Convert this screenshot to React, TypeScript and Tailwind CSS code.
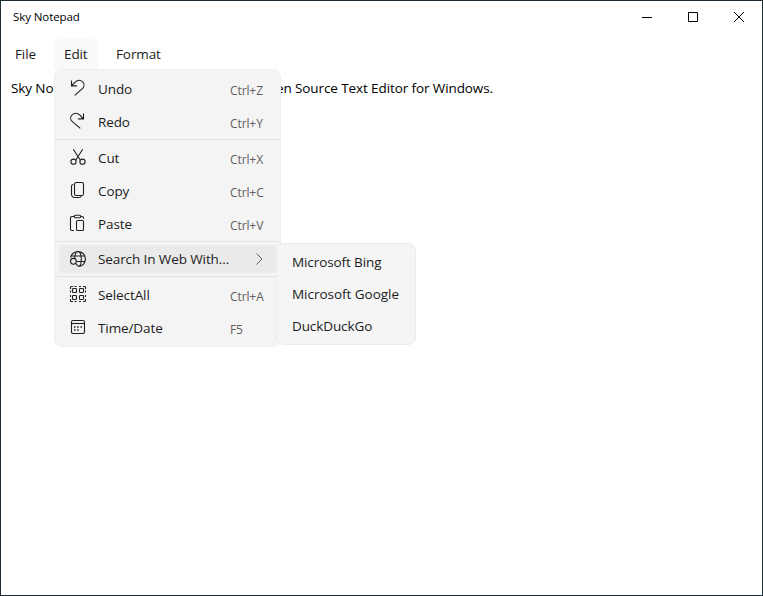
import type { ReactNode } from "react";

function Icon({ children }: { children: ReactNode }) {
  return (
    <svg className="block h-[18px] w-[18px] shrink-0" viewBox="0 0 18 18" fill="none" stroke="#202020" strokeWidth="1.1">
      {children}
    </svg>
  );
}

const undoIcon = (
  <Icon>
    <path d="M2.5 1.5v5.4h5.4M2.8 6.5 6.4 3a4.7 4.7 0 0 1 7.6.3 4.3 4.3 0 0 1-.4 6L5.8 16.4" />
  </Icon>
);
const redoIcon = (
  <Icon>
    <path d="M14.5 1.5v5.4H9.1M14.2 6.5 10.6 3a5 5 0 0 0-7.9.3 4.3 4.3 0 0 0 .4 6l8.2 7.1" />
  </Icon>
);
const cutIcon = (
  <Icon>
    <path d="M4.3 1.2 11.2 12M13.7 1.2 6.8 12" />
    <circle cx="4.5" cy="13.7" r="2.6" />
    <circle cx="13.5" cy="13.7" r="2.6" />
  </Icon>
);
const copyIcon = (
  <Icon>
    <rect x="5.5" y="1.5" width="9" height="13" rx="1.6" />
    <path d="M4.3 3.2c-1 .3-1.8 1-1.8 2v7.8c0 2.1 1.3 3.5 3.4 3.5h4.2c1 0 1.9-.6 2.2-1.6" />
  </Icon>
);
const pasteIcon = (
  <Icon>
    <path d="M5.3 2.5H2.7c-.7 0-1.2.5-1.2 1.2v11.6c0 .7.5 1.2 1.2 1.2H5M11.8 2.5h1.5c.7 0 1.2.5 1.2 1.2v1.1" />
    <rect x="5.2" y="1.3" width="6.6" height="2.4" rx="1.2" />
    <rect x="7.5" y="6.5" width="7" height="10" rx="1.1" />
  </Icon>
);
const webIcon = (
  <Icon>
    <path d="M1.6 7.6A7.5 7.5 0 1 1 9.8 16.5M2.3 6h13.4M8 11.5h8M5.8 8c0-4 1.4-6.6 3.2-6.6s3.3 3.3 3.3 7.4c0 4.6-1.2 7.7-3 7.7" />
    <circle cx="4.4" cy="11.3" r="2.9" />
    <path d="m6.5 13.4 3 3" />
  </Icon>
);
const selectIcon = (
  <Icon>
    <path d="M1.5 4V2.5c0-.6.4-1 1-1H4M5.5 1.5h2M10 1.5h2M14 1.5h1.5c.6 0 1 .4 1 1V4M16.5 5.5v2M16.5 10v2M16.5 14v1.5c0 .6-.4 1-1 1H14M12 16.5h-2M7.5 16.5h-2M4 16.5H2.5c-.6 0-1-.4-1-1V14M1.5 12v-2M1.5 7.5v-2" />
    <rect x="3.5" y="3.5" width="4" height="4" rx=".8" />
    <rect x="10.5" y="3.5" width="4" height="4" rx=".8" />
    <rect x="3.5" y="10.5" width="4" height="4" rx=".8" />
    <rect x="10.5" y="10.5" width="4" height="4" rx=".8" />
  </Icon>
);
const dateIcon = (
  <Icon>
    <rect x="2.5" y="2.5" width="13" height="13" rx="1.5" />
    <path d="M2.5 5.5h13" />
    <path d="M5 9h1.5M8.2 9h1.5M11.5 9H13M5 12h1.5M8.2 12h1.5" strokeWidth="1.7" />
  </Icon>
);

function Row({ icon, label, keys }: { icon: ReactNode; label: string; keys: string }) {
  return (
    <div className="flex h-[33px] items-center pb-[3px] pl-[14px]">
      {icon}
      <span className="ml-[11px] w-[132px] pt-px tracking-[-0.1px]">{label}</span>
      <span className="pt-[5px] text-[12px] tracking-[-0.1px] text-[#606060]">{keys}</span>
    </div>
  );
}

function Separator() {
  return <div className="mb-[2px] h-px bg-[#e2e2e2]" />;
}

export default function App() {
  return (
    <div className="relative flex h-[596px] w-[763px] flex-col overflow-hidden border border-[#1f2d36] bg-white font-['Open_Sans','Noto_Sans',sans-serif] text-[13.5px] leading-[20px] whitespace-nowrap text-[#1c1c1c]">
      <header className="flex h-[32px] shrink-0 items-center justify-between pl-[12px]">
        <h1 className="text-[11.5px] tracking-[-0.08px] text-black">Sky Notepad</h1>
        <div className="flex">
          <button className="flex h-8 w-[46px] items-center justify-center" aria-label="Minimize">
            <svg className="h-[10px] w-[10px]" viewBox="0 0 10 10" stroke="#000"><path d="M0 5.5h10" /></svg>
          </button>
          <button className="flex h-8 w-[46px] items-center justify-center" aria-label="Maximize">
            <svg className="h-[10px] w-[10px]" viewBox="0 0 10 10" fill="none" stroke="#000"><path d="M.5.5h9v9h-9z" /></svg>
          </button>
          <button className="flex h-8 w-[46px] items-center justify-center" aria-label="Close">
            <svg className="h-[10px] w-[10px]" viewBox="0 0 10 10" stroke="#000"><path d="m0 0 10 10M10 0 0 10" /></svg>
          </button>
        </div>
      </header>
      <nav className="flex h-[42px] shrink-0 items-center pl-[4px]">
        <span className="w-[49px] pb-px pl-[10px] tracking-[-0.1px]">File</span>
        <span className="mt-px flex h-8 w-[44px] items-center rounded-[5px] bg-[#f9f9f9] pb-[2px] pl-[10px] tracking-[-0.1px]">Edit</span>
        <span className="pb-px pl-[18px] tracking-[-0.1px]">Format</span>
      </nav>
      <main className="flex w-[492px] justify-between pt-[3px] pl-[10px] text-black">
        <span className="tracking-[-0.1px]">Sky Notepad</span>
        <span className="tracking-[-0.1px]">Open Source Text Editor for Windows.</span>
      </main>

      <div className="absolute top-[68px] left-[53px] h-[278px] w-[227px] rounded-[8px] border border-[#efefef] bg-[#f4f4f4] pt-[3px]">
        <Row icon={undoIcon} label="Undo" keys="Ctrl+Z" />
        <Row icon={redoIcon} label="Redo" keys="Ctrl+Y" />
        <Separator />
        <Row icon={cutIcon} label="Cut" keys="Ctrl+X" />
        <Row icon={copyIcon} label="Copy" keys="Ctrl+C" />
        <Row icon={pasteIcon} label="Paste" keys="Ctrl+V" />
        <Separator />
        <div className="mx-[4px] mt-[3px] mb-[3px] flex h-[28px] items-center rounded-[4px] bg-[#eaeaea] pl-[10px]">
          {webIcon}
          <span className="ml-[11px] w-[155px] tracking-[-0.1px]">Search In Web With...</span>
          <svg className="h-3 w-3" viewBox="0 0 12 12" fill="none" stroke="#606060"><path d="m3.5.5 5.5 5.5-5.5 5.5" /></svg>
        </div>
        <Separator />
        <Row icon={selectIcon} label="SelectAll" keys="Ctrl+A" />
        <Row icon={dateIcon} label="Time/Date" keys="F5" />
      </div>

      <div className="absolute top-[242px] left-[275px] flex h-[102px] w-[140px] flex-col rounded-[8px] border border-[#ebebeb] bg-[#f5f5f5] pt-[2px] pl-[15px] leading-[32px]">
        <span className="tracking-[-0.1px]">Microsoft Bing</span>
        <span className="tracking-[-0.03px]">Microsoft Google</span>
        <span className="tracking-[-0.1px]">DuckDuckGo</span>
      </div>
    </div>
  );
}
